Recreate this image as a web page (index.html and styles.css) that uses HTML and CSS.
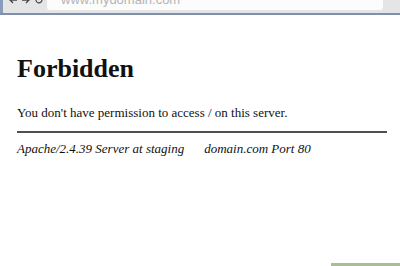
FILE: index.html
```html
<!DOCTYPE html>
<html>
<head>
<meta charset="utf-8">
<link rel="stylesheet" href="styles.css">
</head>
<body>
<div class="chrome">
  <div class="toolbar">
    <div class="navs">
      <svg class="nav" width="10" height="10" viewBox="0 0 10 10"><path d="M9 5H2M5 2L2 5l3 3" fill="none" stroke="#444" stroke-width="1.3"/></svg>
      <svg class="nav" width="10" height="10" viewBox="0 0 10 10"><path d="M1 5h7M5 2l3 3-3 3" fill="none" stroke="#444" stroke-width="1.3"/></svg>
      <svg class="nav" width="10" height="10" viewBox="0 0 10 10"><path d="M8 5a3 3 0 1 1-1-2.3" fill="none" stroke="#444" stroke-width="1.2"/><path d="M6 1l2 1.8-2.4.6z" fill="#444"/></svg>
    </div>
    <div class="url"><span class="urltext">www.mydomain.com</span></div>
  </div>
  <div class="chrome-line"></div>
</div>
<div class="page">
  <h1 class="title">Forbidden</h1>
  <p class="msg">You don't have permission to access / on this server.</p>
  <div class="rule"></div>
  <address class="addr">Apache/2.4.39 Server at staging<span class="gap"></span>domain.com Port 80</address>
</div>
<div class="watermark"></div>
</body>
</html>
```

FILE: styles.css
```css
html, body {
  margin: 0;
  padding: 0;
  background: #fff;
  width: 400px;
  height: 266px;
  overflow: hidden;
}
body {
  position: relative;
  font-family: "Liberation Serif", "Times New Roman", serif;
  color: #111;
}
.chrome {
  height: 15px;
  background: #e4e5e4;
  border-left: 3px solid #8a9cbc;
  box-sizing: border-box;
}
.toolbar {
  height: 13px;
  display: flex;
  align-items: flex-end;
  overflow: hidden;
}
.navs {
  display: flex;
  gap: 3px;
  width: 44px;
  padding-left: 5px;
  box-sizing: border-box;
  margin-bottom: 8px;
  align-self: flex-start;
  margin-top: -5px;
}
.nav { display: block; }
.url {
  align-self: flex-start;
  width: 336px;
  height: 10px;
  background: #fcfcfc;
  border-radius: 0 0 3px 3px;
  overflow: hidden;
  position: relative;
}
.urltext {
  display: block;
  font-family: "Liberation Sans", Arial, sans-serif;
  font-size: 13px;
  line-height: 13px;
  color: #b4b4b4;
  padding-left: 14px;
  margin-top: -7px;
}
.chrome-line {
  height: 2px;
  background: #7f8fae;
  margin-left: -3px;
}
.page {
  padding: 0 13px 0 17px;
}
.title {
  font-size: 26px;
  line-height: 30px;
  font-weight: bold;
  margin: 39px 0 0 0;
}
.msg {
  font-size: 13px;
  line-height: 16px;
  margin: 21px 0 0 0;
}
.rule {
  height: 2px;
  background: #505050;
  margin-top: 10px;
}
.addr {
  font-size: 13px;
  line-height: 16px;
  font-style: italic;
  margin-top: 8px;
}
.gap {
  display: inline-block;
  width: 20px;
}
.watermark {
  position: absolute;
  right: 0;
  bottom: 0;
  width: 69px;
  height: 3px;
  background: #a8bf90;
}
```
